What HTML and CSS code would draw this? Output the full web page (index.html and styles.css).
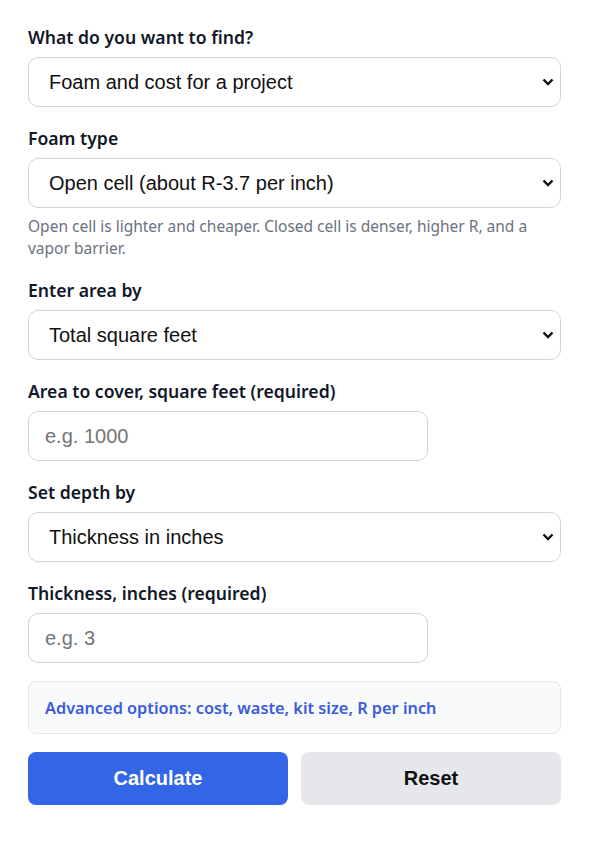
FILE: index.html
```html
<!DOCTYPE html>
<html lang="en">
<head>
<meta charset="UTF-8">
<meta name="viewport" content="width=device-width, initial-scale=1.0">
<title>Spray Foam Calculator</title>
<link rel="stylesheet" href="styles.css">
</head>
<body>
<form class="calc">
<div class="field">
<label for="goal">What do you want to find?</label>
<select id="goal" class="control">
<option>Foam and cost for a project</option>
<option>Board feet only</option>
</select>
</div>

<div class="field">
<label for="foam">Foam type</label>
<select id="foam" class="control">
<option>Open cell (about R-3.7 per inch)</option>
<option>Closed cell (about R-6.5 per inch)</option>
</select>
<p class="hint">Open cell is lighter and cheaper. Closed cell is denser, higher R, and a vapor barrier.</p>
</div>

<div class="field">
<label for="areaMode">Enter area by</label>
<select id="areaMode" class="control">
<option>Total square feet</option>
<option>Length and width</option>
</select>
</div>

<div class="field">
<label for="area">Area to cover, square feet (required)</label>
<input id="area" class="control short" type="text" placeholder="e.g. 1000">
</div>

<div class="field">
<label for="depthMode">Set depth by</label>
<select id="depthMode" class="control">
<option>Thickness in inches</option>
<option>Target R-value</option>
</select>
</div>

<div class="field">
<label for="thick">Thickness, inches (required)</label>
<input id="thick" class="control short" type="text" placeholder="e.g. 3">
</div>

<div class="advanced">Advanced options: cost, waste, kit size, R per inch</div>

<div class="actions">
<button type="button" class="btn primary">Calculate</button>
<button type="reset" class="btn secondary">Reset</button>
</div>
</form>
</body>
</html>
```

FILE: styles.css
```css
* {
margin: 0;
padding: 0;
box-sizing: border-box;
}

body {
background: #fff;
font-family: "Noto Sans", "Open Sans", sans-serif;
color: #111827;
}

.calc {
width: 533px;
margin-left: 28px;
padding-top: 24px;
}

.field {
margin-bottom: 18px;
}

.field label {
display: block;
font-size: 17.6px;
font-weight: 600;
line-height: 26px;
margin-bottom: 7px;
color: #111827;
}

.control {
display: block;
width: 100%;
height: 50px;
padding: 0 16px;
font-family: "Liberation Sans", Arial, sans-serif;
font-size: 20px;
color: #111;
background-color: #fff;
border: 1px solid #d1d5db;
border-radius: 10px;
}

select.control {
appearance: none;
-webkit-appearance: none;
padding-left: 20px;
background-image: url("data:image/svg+xml,%3Csvg xmlns='http://www.w3.org/2000/svg' width='12' height='8' viewBox='0 0 12 8'%3E%3Cpath d='M1.5 1.5 6 6 10.5 1.5' fill='none' stroke='%23111' stroke-width='2.4'/%3E%3C/svg%3E");
background-repeat: no-repeat;
background-position: right 6px center;
background-size: 12px 8px;
}

.control.short {
width: 400px;
}

.control::placeholder {
color: #757575;
}

.hint {
margin-top: 7px;
font-size: 15.5px;
line-height: 22px;
color: #6b7280;
}

.advanced {
height: 53px;
display: flex;
align-items: center;
padding: 0 16px;
background: #f8fafc;
border: 1px solid #e5e7eb;
border-radius: 8px;
color: #3b5bdb;
font-size: 16.3px;
font-weight: 600;
}

.actions {
display: grid;
grid-template-columns: 1fr 1fr;
gap: 13px;
margin-top: 18px;
}

.btn {
height: 53px;
border: none;
border-radius: 8px;
font-family: "Liberation Sans", Arial, sans-serif;
font-size: 20px;
font-weight: 700;
cursor: pointer;
}

.primary {
background: #3366e6;
color: #fff;
}

.secondary {
background: #e5e7eb;
color: #111;
}
```
